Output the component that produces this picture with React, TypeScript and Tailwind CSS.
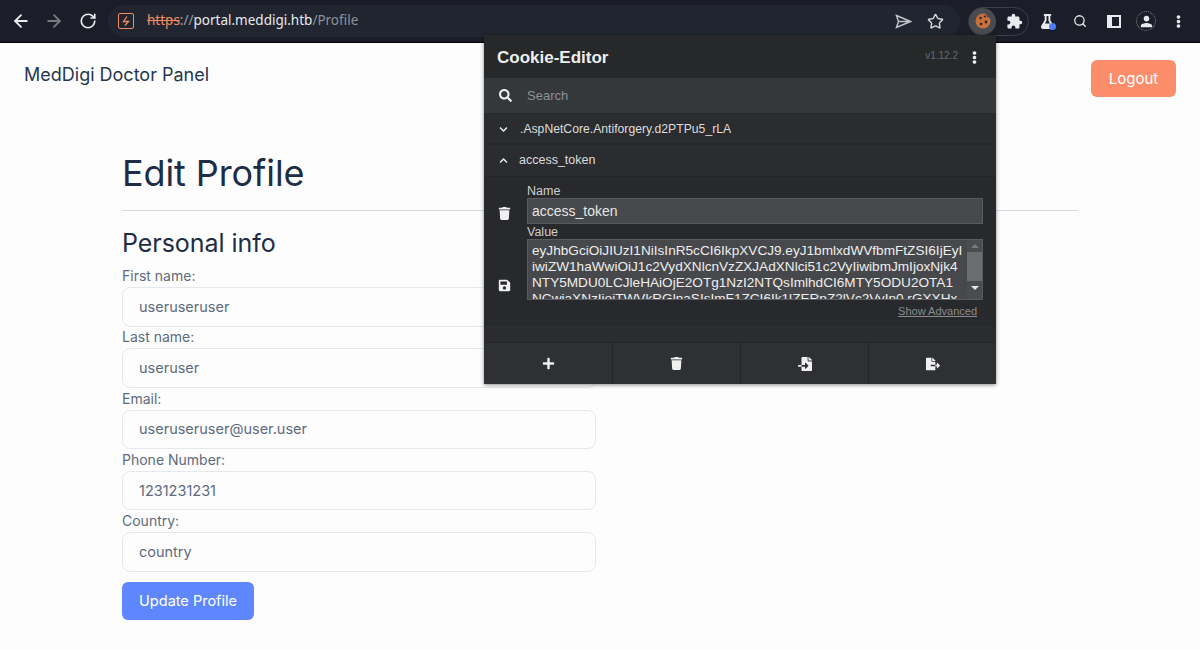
import { ArrowLeft, ArrowRight, RotateCw, Search, Star } from "lucide-react";
import {
  FaChevronDown,
  FaChevronUp,
  FaEllipsisV,
  FaFileExport,
  FaFileImport,
  FaFlask,
  FaPlus,
  FaSave,
  FaSearch,
  FaTrash,
} from "react-icons/fa";
import { MdExtension, MdPerson } from "react-icons/md";

const fields = [
  { label: "First name:", value: "useruseruser" },
  { label: "Last name:", value: "useruser" },
  { label: "Email:", value: "useruseruser@user.user" },
  { label: "Phone Number:", value: "1231231231" },
  { label: "Country:", value: "country" },
];

const BrowserBar = () => {
  return (
    <div className="h-[43px] shrink-0 flex items-center bg-[#1b1e29] border-b border-black font-['Noto_Sans',sans-serif]">
      <div className="w-[108px] flex items-center pl-[11px] gap-[13px] shrink-0">
        <ArrowLeft size={20} strokeWidth={2.2} className="text-[#e8eaed]" />
        <ArrowRight size={20} strokeWidth={2.2} className="text-[#777a80]" />
        <RotateCw size={18} strokeWidth={2.2} className="text-[#e8eaed] ml-[2px]" />
      </div>
      <div className="w-[852px] h-[32px] rounded-full bg-[#212530] flex items-center pl-[10px] pr-[16px] shrink-0">
        <div className="w-[16px] h-[16px] border-[1.5px] border-[#f28b5e] rounded-[2px] flex items-center justify-center">
          <svg width="8" height="10" viewBox="0 0 8 10" fill="none" stroke="#f28b5e" strokeWidth="1.3">
            <path d="M5 0.5 L1.5 5.5 H6.5 L3 9.5" />
          </svg>
        </div>
        <div className="ml-[13px] text-[13.5px] leading-[18px] pb-[2px] flex-1 whitespace-nowrap">
          <span className="text-[#f28b5e] line-through">https</span>
          <span className="text-[#9aa0a6]">://</span>
          <span className="text-[#e8eaed]">portal.meddigi.htb</span>
          <span className="text-[#8d9199]">/Profile</span>
        </div>
        <svg width="17" height="15" viewBox="0 0 17 15" fill="none" stroke="#bfc3c9" strokeWidth="1.5" className="mr-[15px]">
          <path d="M1.5 1.5 L15.5 7.5 L1.5 13.5 L3.5 7.5 Z M3.5 7.5 H15" />
        </svg>
        <Star size={17} strokeWidth={2} className="text-[#d5d8dc]" />
      </div>
      <div className="ml-[8px] w-[61px] h-[29px] rounded-full border border-[#3c4049] flex items-center shrink-0">
        <div className="w-[27px] h-[27px] rounded-full bg-[#494b50] flex items-center justify-center">
          <svg width="16" height="16" viewBox="0 0 16 16">
            <circle cx="8" cy="8" r="7.5" fill="#c9703c" />
            <circle cx="14.5" cy="1.5" r="3.2" fill="#494b50" />
            <circle cx="5.5" cy="5" r="1.3" fill="#33241d" />
            <circle cx="9.8" cy="3.5" r="1.1" fill="#33241d" />
            <circle cx="11" cy="9" r="1.4" fill="#33241d" />
            <circle cx="6" cy="11" r="1.3" fill="#33241d" />
          </svg>
        </div>
        <MdExtension size={17} className="text-[#e8eaed] ml-[10px]" />
      </div>
      <div className="relative ml-[11px] shrink-0">
        <FaFlask size={15} className="text-[#e8eaed]" />
        <span className="absolute left-[9px] top-[9px] w-[7px] h-[7px] rounded-full bg-[#4f7df3]" />
      </div>
      <Search size={14} strokeWidth={2.2} className="text-[#e8eaed] ml-[18px] shrink-0" />
      <div className="ml-[20px] w-[14px] h-[13px] border-2 border-[#e8eaed] bg-[#e8eaed] flex justify-end shrink-0">
        <div className="w-[7px] h-full bg-[#1b1e29]" />
      </div>
      <div className="ml-[15px] w-[20px] h-[20px] rounded-full border border-dotted border-[#8a8d93] flex items-center justify-center shrink-0">
        <MdPerson size={17} className="text-[#e8eaed]" />
      </div>
      <FaEllipsisV size={13} className="text-[#e8eaed] ml-[16px] shrink-0" />
    </div>
  );
};

const CookieEditor = () => {
  return (
    <div className="absolute left-[484px] top-[35px] w-[512px] h-[349px] bg-[#27292c] shadow-[0_1px_4px_rgba(0,0,0,0.45)] flex flex-col font-['Liberation_Sans',sans-serif] text-[#e6e6e6]">
      <div className="h-[43px] shrink-0 flex items-center bg-[#26282a] pl-[13px] pr-[15px] pt-[2px]">
        <span className="text-[17px] font-bold text-[#eeeeee] flex-1">Cookie-Editor</span>
        <span className="text-[10px] text-[#666a6d] mr-[10px] -mt-[5px]">v1.12.2</span>
        <FaEllipsisV size={13} className="text-[#f0f0f0]" />
      </div>
      <div className="h-[35px] shrink-0 flex items-center bg-[#35383b] pl-[15px]">
        <FaSearch size={13} className="text-[#f0f0f0]" />
        <span className="ml-[15px] text-[13px] text-[#8e9194]">Search</span>
      </div>
      <div className="h-[31px] mt-[1px] shrink-0 flex items-center bg-[#2a2c2f] border-b-2 border-[#242628] pl-[15px] pt-[1px]">
        <FaChevronDown size={9} className="text-[#f0f0f0]" />
        <span className="ml-[12px] text-[12.2px] text-[#dddddd]">.AspNetCore.Antiforgery.d2PTPu5_rLA</span>
      </div>
      <div className="h-[31px] shrink-0 flex items-center bg-[#2a2c2f] pl-[15px]">
        <FaChevronUp size={9} className="text-[#f0f0f0]" />
        <span className="ml-[11px] text-[12.5px] text-[#dddddd]">access_token</span>
      </div>
      <div className="h-[150px] shrink-0 flex bg-[#27292c] border-t border-[#222427]">
        <div className="w-[43px] shrink-0 flex flex-col items-center pt-[30px] pr-[3px] gap-[59px]">
          <FaTrash size={13} className="text-[#f0f0f0]" />
          <FaSave size={13} className="text-[#f0f0f0]" />
        </div>
        <div className="w-[456px] shrink-0">
          <div className="text-[12.5px] leading-[14px] mt-[7px] text-[#cfcfcf]">Name</div>
          <div className="h-[26px] bg-[#46484b] border border-[#595b5e] pl-[4px] text-[14px] leading-[24px] text-[#e6e6e6]">
            access_token
          </div>
          <div className="text-[12.5px] leading-[14px] pt-[1px] text-[#cfcfcf]">Value</div>
          <div className="h-[61px] bg-[#46484b] border border-[#595b5e] flex overflow-hidden">
            <div className="flex-1 pl-[4px] pt-[3px] text-[13.62px] leading-[16px] text-[#eeeeee] whitespace-nowrap overflow-hidden">
              <div>eyJhbGciOiJIUzI1NiIsInR5cCI6IkpXVCJ9.eyJ1bmlxdWVfbmFtZSI6IjEyI</div>
              <div>iwiZW1haWwiOiJ1c2VydXNlcnVzZXJAdXNlci51c2VyIiwibmJmIjoxNjk4</div>
              <div>NTY5MDU0LCJleHAiOjE2OTg1NzI2NTQsImlhdCI6MTY5ODU2OTA1</div>
              <div>NCwiaXNzIjoiTWVkRGlnaSIsImF1ZCI6Ik1lZERpZ2lVc2VyIn0.rGXXHx</div>
            </div>
            <div className="w-[15px] shrink-0 flex flex-col items-center bg-[#4a4c4f]">
              <span className="mt-[4px] w-0 h-0 border-x-[4px] border-x-transparent border-b-[4px] border-b-[#777a7c]" />
              <div className="mt-[4px] w-full h-[29px] bg-[#6b6d70]" />
              <span className="mt-[5px] w-0 h-0 border-x-[4px] border-x-transparent border-t-[4px] border-t-[#e6e6e6]" />
            </div>
          </div>
          <div className="mt-[5px] text-right pr-[6px] text-[11px] leading-[12px] underline text-[#8a8c8e]">Show Advanced</div>
        </div>
      </div>
      <div className="h-[16px] shrink-0 bg-[#2a2c2f]" />
      <div className="flex-1 grid grid-cols-4 bg-[#2f3033] border-t border-[#222427]">
        <div className="flex items-center justify-center">
          <FaPlus size={13} className="text-[#f0f0f0]" />
        </div>
        <div className="flex items-center justify-center border-l border-[#222427]">
          <FaTrash size={13} className="text-[#f0f0f0]" />
        </div>
        <div className="flex items-center justify-center border-l border-[#222427]">
          <FaFileImport size={14} className="text-[#f0f0f0]" />
        </div>
        <div className="flex items-center justify-center border-l border-[#222427]">
          <FaFileExport size={14} className="text-[#f0f0f0]" />
        </div>
      </div>
    </div>
  );
};

const App = () => {
  return (
    <div className="relative w-[1200px] h-[650px] overflow-hidden flex flex-col bg-[#fdfdfe] font-['Inter',sans-serif] text-[#1e2d45]">
      <BrowserBar />
      <div className="flex items-start justify-between pl-[24px] pr-[24px] pt-[17px]">
        <span className="text-[18px] leading-[30px] text-[#27364f]">MedDigi Doctor Panel</span>
        <button className="w-[85px] h-[37px] rounded-[6px] bg-[#fb8d6b] text-white text-[15px] pt-[1px]">Logout</button>
      </div>
      <div className="w-[956px] ml-[122px] mt-[51px]">
        <h1 className="text-[36px] leading-[50px] tracking-[-0.1px] text-[#1e2d45]">Edit Profile</h1>
        <hr className="mt-[12px] border-[#d5dbe3]" />
        <h2 className="mt-[16px] text-[25px] leading-[32px] tracking-[-0.05px] text-[#1e2d45]">Personal info</h2>
        <div className="mt-[7px] w-[474px] flex flex-col gap-[0.75px]">
          {fields.map((f, idx) => (
            <div key={idx}>
              <label className="block text-[14px] leading-[20px] text-[#5e6b7d]">{f.label}</label>
              <div className="mt-[1px] h-[39.5px] rounded-[8px] border-[1.5px] border-[#e3e9ef] pl-[16px] flex items-center text-[14.5px] text-[#5e6b7d]">
                {f.value}
              </div>
            </div>
          ))}
        </div>
        <button className="mt-[10.5px] w-[132px] h-[38px] rounded-[6px] bg-[#5f87fd] text-white text-[14.5px]">
          Update Profile
        </button>
      </div>
      <CookieEditor />
    </div>
  );
};

export default App;
